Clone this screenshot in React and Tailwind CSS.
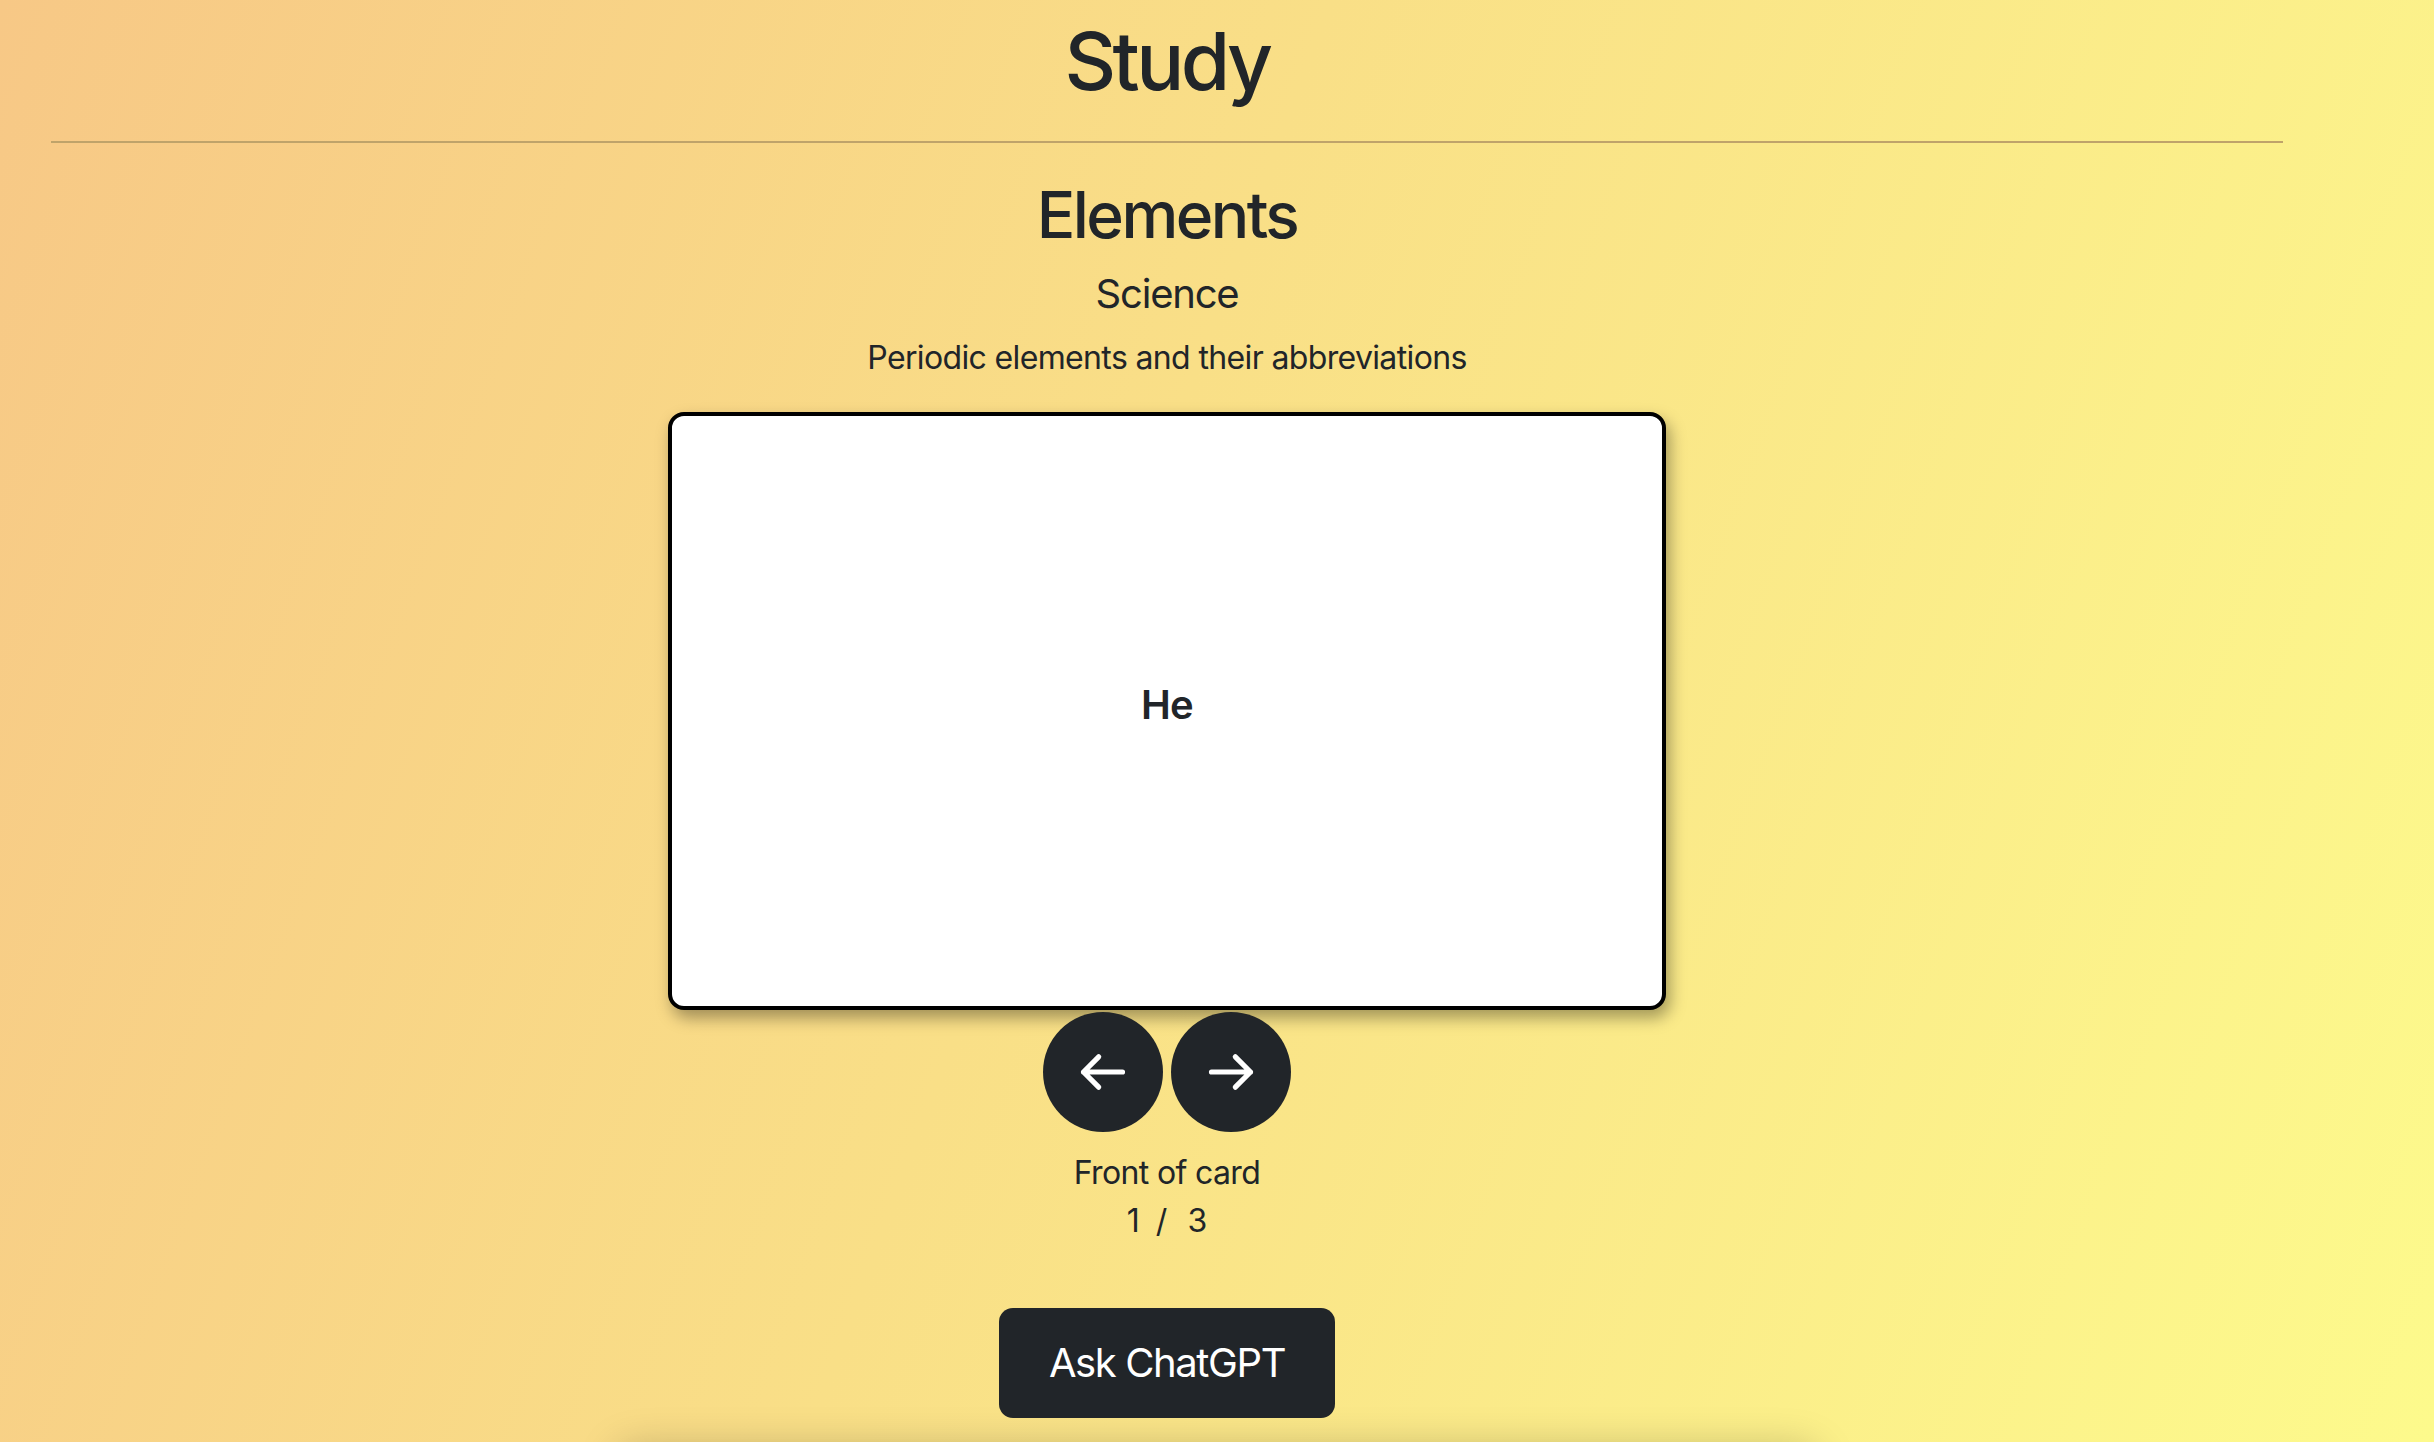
import { useState } from "react";

const cards = [
    { front: "He", back: "Helium" },
    { front: "Na", back: "Sodium" },
    { front: "Fe", back: "Iron" },
];

function ArrowIcon({ dir }) {
    // heroicons-style outline arrow
    const d = dir === "left" ? "M10 19l-7-7m0 0l7-7m-7 7h18" : "M14 5l7 7m0 0l-7 7m7-7H3";
    return (
        <svg viewBox="0 0 24 24" className="w-[52px] h-[52px]" fill="none" stroke="white" strokeWidth="2.4" strokeLinecap="round" strokeLinejoin="round">
            <path d={d} />
        </svg>
    );
}

export default function App() {
    const [index, setIndex] = useState(0);
    const [flipped, setFlipped] = useState(false);

    const prev = () => { setIndex((index + cards.length - 1) % cards.length); setFlipped(false); };
    const next = () => { setIndex((index + 1) % cards.length); setFlipped(false); };

    return (
        <div className="h-[1442px] w-full overflow-hidden bg-[linear-gradient(110deg,#f7c886_0%,#f9df87_45%,#fdfa8c_100%)] text-[#212529] font-['Inter','Noto_Sans',sans-serif]">
            <div className="w-[2334px] px-[51px] pt-[13px] flex flex-col items-center">
                <h1 className="text-[80px] leading-[1.2] font-medium tracking-[-0.045em]">Study</h1>
                <hr className="w-full mt-[32px] border-0 border-t-2 border-[#bfa36a]" />

                <h2 className="mt-[34px] text-[64px] leading-[1.2] font-medium tracking-[-0.04em]">Elements</h2>
                <div className="mt-[16px] text-[40px] leading-[1.2] tracking-[-0.03em]">Science</div>
                <p className="mt-[16px] text-[32px] leading-[1.5] tracking-[-0.02em]">Periodic elements and their abbreviations</p>

                <div
                    onClick={() => setFlipped(!flipped)}
                    className="mt-[30px] w-[998px] h-[598px] bg-white border-4 border-black rounded-[16px] shadow-[4px_8px_16px_rgba(0,0,0,0.35)] flex items-center justify-center cursor-pointer"
                >
                    <span className="text-[40px] font-semibold -mt-[12px] tracking-[-0.02em]">{flipped ? cards[index].back : cards[index].front}</span>
                </div>

                <div className="mt-[2px] flex gap-[8px]">
                    <button onClick={prev} className="w-[120px] h-[120px] rounded-full bg-[#212529] flex items-center justify-center">
                        <ArrowIcon dir="left" />
                    </button>
                    <button onClick={next} className="w-[120px] h-[120px] rounded-full bg-[#212529] flex items-center justify-center">
                        <ArrowIcon dir="right" />
                    </button>
                </div>

                <p className="mt-[17px] text-[32px] leading-[1.5] tracking-[-0.02em]">{flipped ? "Back of card" : "Front of card"}</p>
                <p className="text-[32px] leading-[1.5] flex">
                    <span>{index + 1}</span>
                    <span className="ml-[16px]">/</span>
                    <span className="ml-[20px]">{cards.length}</span>
                </p>

                <button className="mt-[63px] px-[50px] py-[25px] rounded-[14px] bg-[#212529] text-white text-[40px] leading-[1.5] tracking-[-0.035em]">
                    Ask ChatGPT
                </button>
            </div>
            <div className="mx-auto mt-[30px] w-[1200px] h-[200px] rounded-[16px] shadow-[0_0_40px_rgba(0,0,0,0.22)]" />
        </div>
    );
}
